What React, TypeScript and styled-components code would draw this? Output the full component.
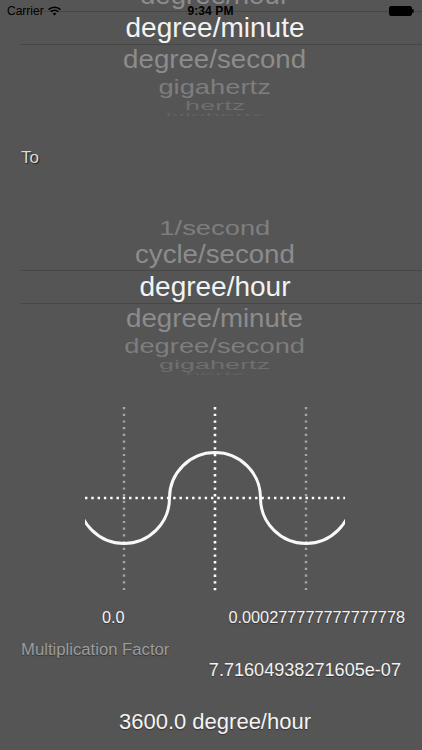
import styled, { createGlobalStyle } from 'styled-components'

const GlobalStyle = createGlobalStyle`
    html, body {
        margin: 0;
        padding: 0;
        background-color: #555555;
    }
    body {
        font-family: 'Liberation Sans', Arial, Helvetica, sans-serif;
    }
`

// wheel geometry: radius and angle between two rows
const RADIUS = 88
const STEP = 21
const SELECTED_HEIGHT = 34
const ROW_COLORS = ['#f2f2f2', '#8c8c8c', '#7e7e7e', '#6f6f6f', '#636363']

const rad = (deg: number) => (deg * Math.PI) / 180
const edge = (k: number) => Math.sin(rad(Math.min(90, (k + 0.5) * STEP)))

const rowHeight = (k: number) => {
    const d = Math.abs(k)
    if (d === 0) return SELECTED_HEIGHT
    return RADIUS * (edge(d) - edge(d - 1))
}

const Screen = styled.div`
    position: relative;
    width: 422px;
    height: 750px;
    overflow: hidden;
    background-color: #555555;
`

const StatusBar = styled.div`
    position: absolute;
    top: 0;
    left: 0;
    right: 0;
    height: 22px;
    display: flex;
    align-items: center;
    justify-content: space-between;
    padding: 0 7px;
    box-sizing: border-box;
    font-size: 12px;
    color: #000;
    z-index: 2;
`

const Carrier = styled.div`
    display: flex;
    align-items: center;
    gap: 4px;
    width: 120px;
`

const Clock = styled.div`
    font-weight: bold;
    font-size: 12px;
    letter-spacing: 0.1px;
`

const BatterySlot = styled.div`
    width: 120px;
    display: flex;
    justify-content: flex-end;
    padding-right: 1px;
`

const Content = styled.div`
    display: flex;
    flex-direction: column;
    margin-top: -61px;
`

const Wheel = styled.div`
    display: flex;
    flex-direction: column;
    margin-left: 8px;
`

const Row = styled.div<{ $h: number; $selected: boolean }>`
    position: relative;
    height: ${p => p.$h}px;
    display: flex;
    align-items: center;
    justify-content: center;
    overflow: visible;

    ${p =>
        p.$selected &&
        `
        &::before, &::after {
            content: '';
            position: absolute;
            left: 13px;
            right: 0;
            height: 1px;
            background-color: #474747;
        }
        &::before { top: 0; }
        &::after { bottom: 0; }
    `}
`

const RowText = styled.span<{ $d: number; $sy: number; $sx: number }>`
    display: block;
    font-size: 28px;
    line-height: 30px;
    white-space: nowrap;
    color: ${p => ROW_COLORS[p.$d]};
    transform: scale(${p => p.$sx}, ${p => p.$sy});
`

const SectionLabel = styled.div`
    margin: 31px 0 0 21px;
    height: 20px;
    line-height: 20px;
    font-size: 17px;
    color: #dadada;
    text-shadow: 1px 1px 1px #1e1e1e;
`

const PickerGap = styled.div`
    height: 30px;
`

const Chart = styled.svg`
    display: block;
    margin: 29px 0 0 85px;
`

const Bounds = styled.div`
    display: flex;
    justify-content: space-between;
    margin-top: 15px;
    padding: 0 17px 0 102px;
    font-size: 16.3px;
    line-height: 20px;
    color: #f2f2f2;
    text-shadow: 0 1px 1px #333;
`

const FactorLabel = styled.div`
    margin: 13px 0 0 21px;
    font-size: 16.7px;
    line-height: 20px;
    color: #9c9c9c;
    text-shadow: 0 1px 1px #333;
`

const FactorValue = styled.div`
    align-self: flex-end;
    padding-right: 21px;
    font-size: 18.1px;
    line-height: 20px;
    color: #f2f2f2;
    text-shadow: 0 1px 1px #333;
`

const Result = styled.div`
    margin: 29px 0 0 8px;
    text-align: center;
    font-size: 22px;
    line-height: 26px;
    color: #f4f4f4;
    text-shadow: 0 1px 1px #333;
`

interface IPickerProps {
    items: string[]
    selected: number
}

const Picker = ({ items, selected }: IPickerProps) => {
    const slots = [-4, -3, -2, -1, 0, 1, 2, 3, 4]
    return (
        <Wheel>
            {slots.map(k => {
                const d = Math.abs(k)
                const label = items[selected + k]
                const sy = Math.max(0.06, Math.cos(rad(Math.min(86, d * STEP))))
                return (
                    <Row key={k} $h={rowHeight(k)} $selected={k === 0}>
                        {label && (
                            <RowText $d={d} $sy={sy} $sx={1 - d * 0.012}>
                                {label}
                            </RowText>
                        )}
                    </Row>
                )
            })}
        </Wheel>
    )
}

const WifiIcon = () => (
    <svg width="13" height="10" viewBox="0 0 13 10">
        <path d="M0.6 3.6 A8.5 8.5 0 0 1 12.4 3.6" fill="none" stroke="#000" strokeWidth="1.6" />
        <path d="M2.7 5.7 A5.5 5.5 0 0 1 10.3 5.7" fill="none" stroke="#000" strokeWidth="1.6" />
        <path d="M4.7 7.7 A2.6 2.6 0 0 1 8.3 7.7 L6.5 9.6 Z" fill="#000" />
    </svg>
)

const BatteryIcon = () => (
    <svg width="25" height="10" viewBox="0 0 25 10">
        <rect x="0.5" y="0.5" width="22" height="9" rx="1.5" fill="#000" stroke="#000" />
        <rect x="23" y="3.2" width="1.6" height="3.6" fill="#000" />
    </svg>
)

const WaveChart = () => {
    const mid = 93
    return (
        <Chart width="260" height="187" viewBox="0 0 260 187">
            <line x1="39" y1="2" x2="39" y2="186" stroke="#a6a6a6" strokeWidth="2.4" strokeDasharray="2.2 4.5" />
            <line x1="221" y1="2" x2="221" y2="186" stroke="#a6a6a6" strokeWidth="2.4" strokeDasharray="2.2 4.5" />
            <line x1="130" y1="2" x2="130" y2="186" stroke="#ffffff" strokeWidth="2.6" strokeDasharray="2.4 4.3" />
            <line x1="0" y1={mid} x2="260" y2={mid} stroke="#ffffff" strokeWidth="2.6" strokeDasharray="2.4 3.9" />
            <path
                d={`M -6.5 ${mid} A 45.5 45.5 0 0 0 84.5 ${mid} A 45.5 45.5 0 0 1 175.5 ${mid} A 45.5 45.5 0 0 0 266.5 ${mid}`}
                fill="none"
                stroke="#f8f8f8"
                strokeWidth="3"
            />
        </Chart>
    )
}

const units = [
    '1/second',
    'cycle/second',
    'degree/hour',
    'degree/minute',
    'degree/second',
    'gigahertz',
    'hertz',
    'kilohertz',
]

const App = () => {
    return (
        <>
            <GlobalStyle />
            <Screen>
                <StatusBar>
                    <Carrier>
                        Carrier <WifiIcon />
                    </Carrier>
                    <Clock>9:34 PM</Clock>
                    <BatterySlot>
                        <BatteryIcon />
                    </BatterySlot>
                </StatusBar>
                <Content>
                    <Picker items={units} selected={3} />
                    <SectionLabel>To</SectionLabel>
                    <PickerGap />
                    <Picker items={units} selected={2} />
                    <WaveChart />
                    <Bounds>
                        <span>0.0</span>
                        <span>0.000277777777777778</span>
                    </Bounds>
                    <FactorLabel>Multiplication Factor</FactorLabel>
                    <FactorValue>7.71604938271605e-07</FactorValue>
                    <Result>3600.0 degree/hour</Result>
                </Content>
            </Screen>
        </>
    )
}

export default App
